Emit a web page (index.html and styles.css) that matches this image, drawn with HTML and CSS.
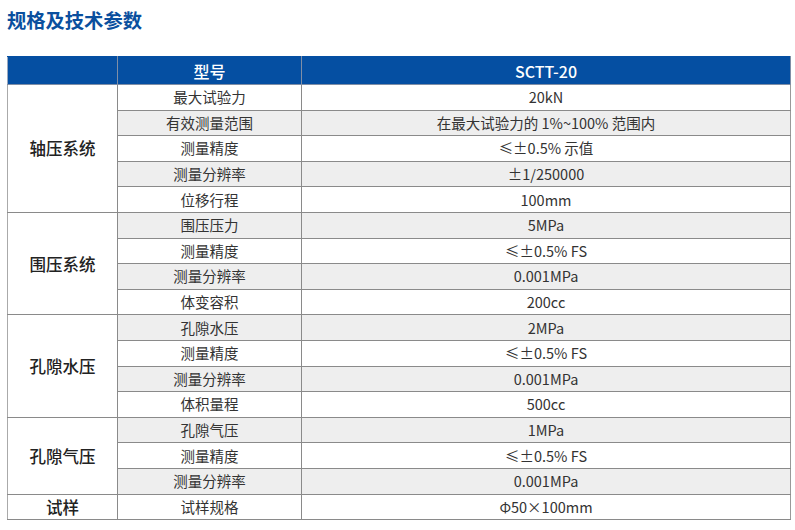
FILE: index.html
```html
<!DOCTYPE html>
<html lang="zh">
<head>
<meta charset="utf-8">
<link rel="stylesheet" href="styles.css">
</head>
<body>
<h2 class="title">规格及技术参数</h2>
<table class="spec">
  <colgroup><col class="c1"><col class="c2"><col class="c3"></colgroup>
  <thead>
    <tr><th></th><th>型号</th><th>SCTT-20</th></tr>
  </thead>
  <tbody>
    <tr><td class="grp" rowspan="5">轴压系统</td><td>最大试验力</td><td>20kN</td></tr>
    <tr class="alt"><td>有效测量范围</td><td>在最大试验力的 1%~100% 范围内</td></tr>
    <tr><td>测量精度</td><td>≤±0.5% 示值</td></tr>
    <tr class="alt"><td>测量分辨率</td><td>±1/250000</td></tr>
    <tr><td>位移行程</td><td>100mm</td></tr>
    <tr class="alt"><td class="grp" rowspan="4">围压系统</td><td>围压压力</td><td>5MPa</td></tr>
    <tr><td>测量精度</td><td>≤±0.5% FS</td></tr>
    <tr class="alt"><td>测量分辨率</td><td>0.001MPa</td></tr>
    <tr><td>体变容积</td><td>200cc</td></tr>
    <tr class="alt"><td class="grp" rowspan="4">孔隙水压</td><td>孔隙水压</td><td>2MPa</td></tr>
    <tr><td>测量精度</td><td>≤±0.5% FS</td></tr>
    <tr class="alt"><td>测量分辨率</td><td>0.001MPa</td></tr>
    <tr><td>体积量程</td><td>500cc</td></tr>
    <tr class="alt"><td class="grp" rowspan="3">孔隙气压</td><td>孔隙气压</td><td>1MPa</td></tr>
    <tr><td>测量精度</td><td>≤±0.5% FS</td></tr>
    <tr class="alt"><td>测量分辨率</td><td>0.001MPa</td></tr>
    <tr><td class="grp">试样</td><td>试样规格</td><td>Φ50×100mm</td></tr>
  </tbody>
</table>
</body>
</html>
```
FILE: styles.css
```css
html, body {
  margin: 0;
  padding: 0;
  background: #fff;
}
body {
  padding: 0 5px 0 7px;
  font-family: "Noto Sans CJK SC", "Noto Sans", sans-serif;
  color: #333;
}
.title {
  margin: 0;
  padding-top: 8px;
  height: 56px;
  box-sizing: border-box;
  font-size: 19.3px;
  line-height: 24px;
  font-weight: 700;
  color: #0a4f9e;
}
.spec {
  width: 783px;
  border-collapse: collapse;
  table-layout: fixed;
  font-size: 14.5px;
}
.c1 { width: 110px; }
.c2 { width: 184px; }
.c3 { width: 489px; }
.spec th {
  height: 27px;
  padding: 0;
  background: #054fa2;
  color: #fff;
  font-size: 16px;
  font-weight: 500;
  border: 1px solid #7f8ea6;
  border-top-color: #054fa2;
  border-left-color: #9aa9c0;
  text-align: center;
}
.spec th + th {
  border-left-color: #a9bad6;
}
.spec td {
  height: 24.6px;
  padding: 0;
  text-align: center;
  border: 1px solid #8a8a8a;
  line-height: 20px;
  white-space: nowrap;
}
.spec td.grp {
  font-size: 16.5px;
  font-weight: 500;
  color: #222;
  background: #fff;
  border-left: 1px solid #aaa;
}
.spec tr.alt td {
  background: #eeeeee;
}
.spec tr.alt td.grp {
  background: #fff;
}
.spec td:last-child {
  border-right-color: #999;
}
```
